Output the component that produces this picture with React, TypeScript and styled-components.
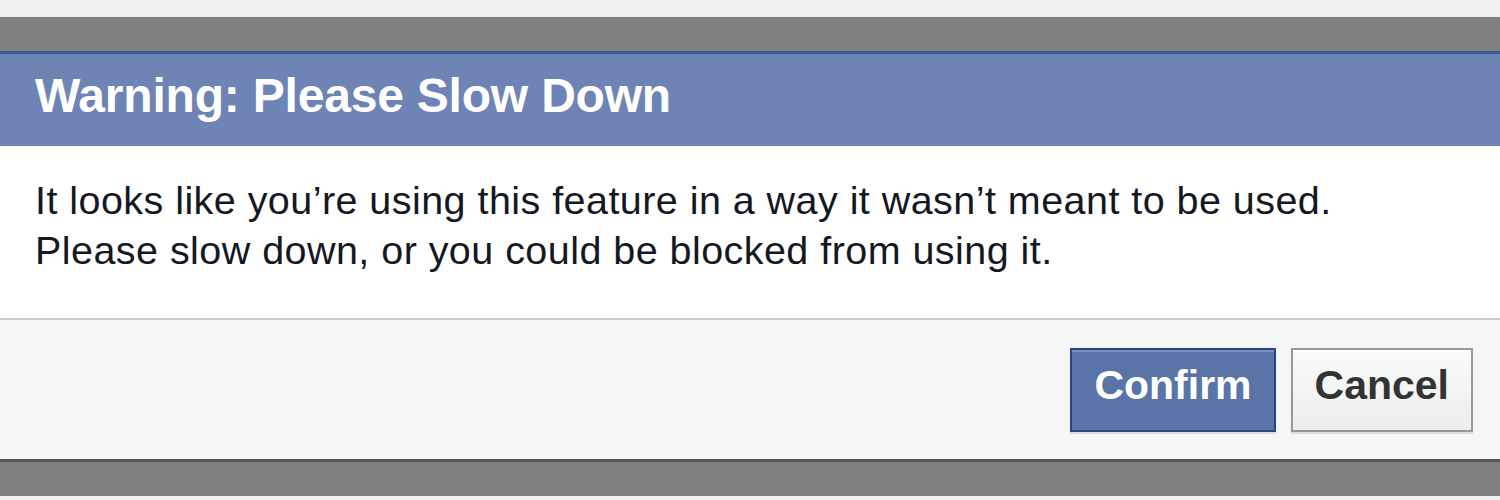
import React from 'react';
import styled, { createGlobalStyle } from 'styled-components';

const GlobalStyle = createGlobalStyle`
  html, body {
    margin: 0;
    padding: 0;
    background: #eeeeee;
  }
  body {
    font-family: 'Liberation Sans', Arial, Helvetica, sans-serif;
  }
`;

const Page = styled.div`
  width: 1500px;
  height: 500px;
  display: flex;
  flex-direction: column;
  overflow: hidden;
`;

const Strip = styled.div<{ $h: number }>`
  height: ${(p) => p.$h}px;
  background: #f0f0f0;
  flex-shrink: 0;
`;

const Shade = styled.div<{ $h: number; $edge?: string }>`
  height: ${(p) => p.$h}px;
  box-sizing: border-box;
  background: #808080;
  flex-shrink: 0;
  border-top: ${(p) => (p.$edge ? `3px solid ${p.$edge}` : 'none')};
`;

const Dialog = styled.div`
  display: flex;
  flex-direction: column;
  flex-shrink: 0;
`;

const Header = styled.div`
  height: 95px;
  box-sizing: border-box;
  background: #6d84b4;
  border-top: 3px solid #3b5998;
  padding: 0 35px 8px;
  color: #ffffff;
  font-weight: bold;
  font-size: 48px;
  line-height: 84px;
  letter-spacing: -0.2px;
`;

const Body = styled.div`
  background: #ffffff;
  padding: 29px 35px 43px;
  font-size: 39.5px;
  letter-spacing: 0.45px;
  line-height: 50px;
  color: #141823;
  border-bottom: 2px solid #cccccc;
`;

const Footer = styled.div`
  height: 139px;
  box-sizing: border-box;
  background: #f5f6f7;
  display: flex;
  justify-content: flex-end;
  align-items: flex-start;
  gap: 15px;
  padding: 28px 27px 0 0;
`;

const Button = styled.button<{ $primary?: boolean }>`
  height: 84px;
  box-sizing: border-box;
  display: flex;
  align-items: center;
  padding: 0 22px 10px;
  font-family: 'Liberation Sans', Arial, Helvetica, sans-serif;
  font-weight: bold;
  font-size: 41px;
  cursor: pointer;
  border: 2px solid ${(p) => (p.$primary ? '#29447e' : '#999999')};
  background: ${(p) =>
    p.$primary ? '#5b74a8' : 'linear-gradient(#f9fafa, #eceded)'};
  color: ${(p) => (p.$primary ? '#ffffff' : '#333333')};
  box-shadow: inset 0 2px 0 ${(p) => (p.$primary ? '#7a8fbc' : '#ffffff')},
    0 2px 1px rgba(0, 0, 0, 0.1);
`;

export default function App() {
  return (
    <Page>
      <GlobalStyle />
      <Strip $h={17} />
      <Shade $h={34} />
      <Dialog>
        <Header>Warning: Please Slow Down</Header>
        <Body>
          It looks like you’re using this feature in a way it wasn’t meant to be used.
          <br />
          Please slow down, or you could be blocked from using it.
        </Body>
        <Footer>
          <Button $primary>Confirm</Button>
          <Button>Cancel</Button>
        </Footer>
      </Dialog>
      <Shade $h={37} $edge="#555555" />
      <Strip $h={10} />
    </Page>
  );
}
